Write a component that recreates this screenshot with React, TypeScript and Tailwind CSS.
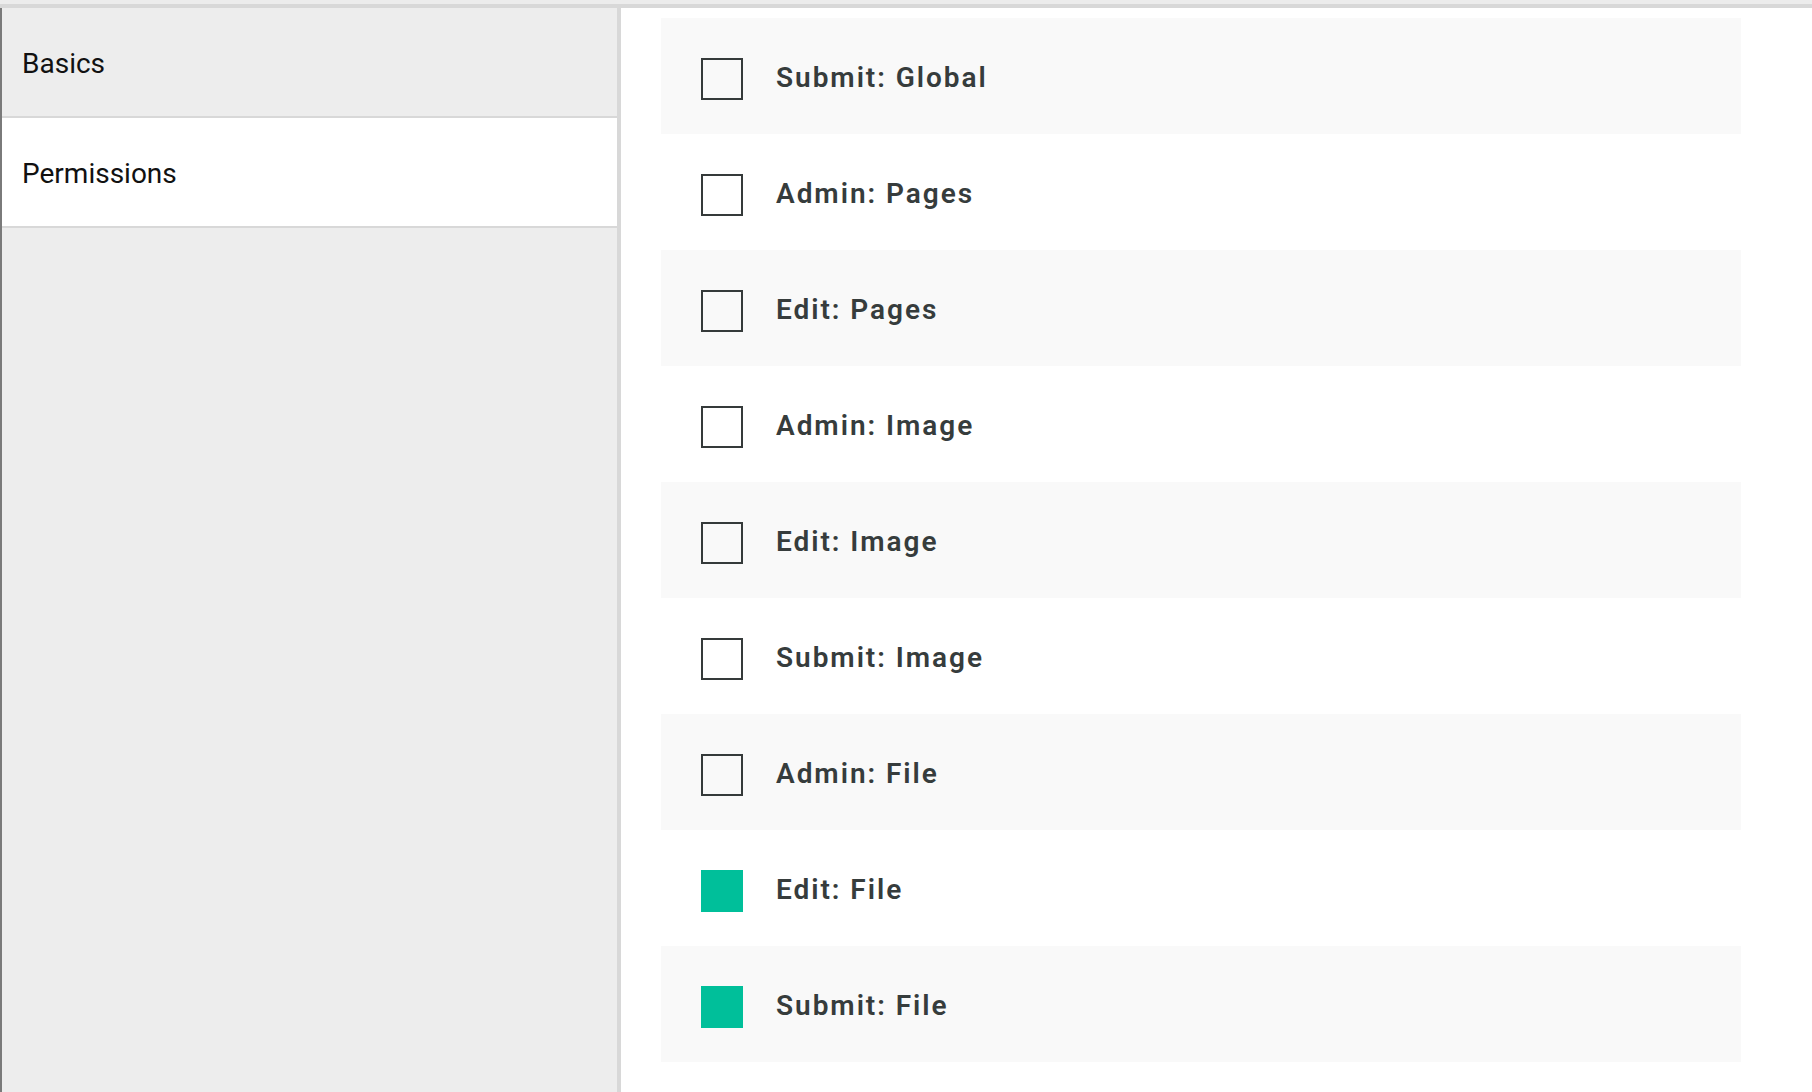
import React from "react";

const perms: { label: string; checked: boolean }[] = [
  { label: "Submit: Global", checked: false },
  { label: "Admin: Pages", checked: false },
  { label: "Edit: Pages", checked: false },
  { label: "Admin: Image", checked: false },
  { label: "Edit: Image", checked: false },
  { label: "Submit: Image", checked: false },
  { label: "Admin: File", checked: false },
  { label: "Edit: File", checked: true },
  { label: "Submit: File", checked: true },
];

export default function App() {
  return (
    <div
      className="h-screen w-full overflow-hidden bg-[#ececec] pt-[4px]"
      style={{ fontFamily: "Roboto, 'Liberation Sans', sans-serif" }}
    >
      <div className="flex h-full border-t-4 border-[#d8d8d8]">
        <aside className="box-border w-[621px] shrink-0 border-l-2 border-r-4 border-[#d8d8d8] border-l-[#7a7a7a] bg-[#ededed]">
          <div className="flex h-[110px] items-center border-b-2 border-[#d8d8d8] pl-[20px] text-[28px] text-[#111]">
            <span className="mt-[4px]">Basics</span>
          </div>
          <div className="flex h-[110px] items-center border-b-2 border-[#d8d8d8] bg-white pl-[20px] text-[28px] text-[#111]">
            <span className="mt-[4px]">Permissions</span>
          </div>
        </aside>
        <main className="flex-1 bg-white pl-[40px] pt-[10px]">
          {perms.map((p, i) => (
            <div
              key={p.label}
              className={
                "flex h-[116px] w-[1080px] items-center pl-[40px] " +
                (i % 2 === 0 ? "bg-[#f9f9f9]" : "bg-white")
              }
            >
              <div
                className={
                  "mt-[6px] box-border h-[42px] w-[42px] shrink-0 " +
                  (p.checked ? "bg-[#00bf9a]" : "border-2 border-[#353a3a]")
                }
              />
              <span className="ml-[33px] mt-[4px] text-[28px] font-semibold tracking-[0.07em] text-[#363c3c]">
                {p.label}
              </span>
            </div>
          ))}
        </main>
      </div>
    </div>
  );
}
